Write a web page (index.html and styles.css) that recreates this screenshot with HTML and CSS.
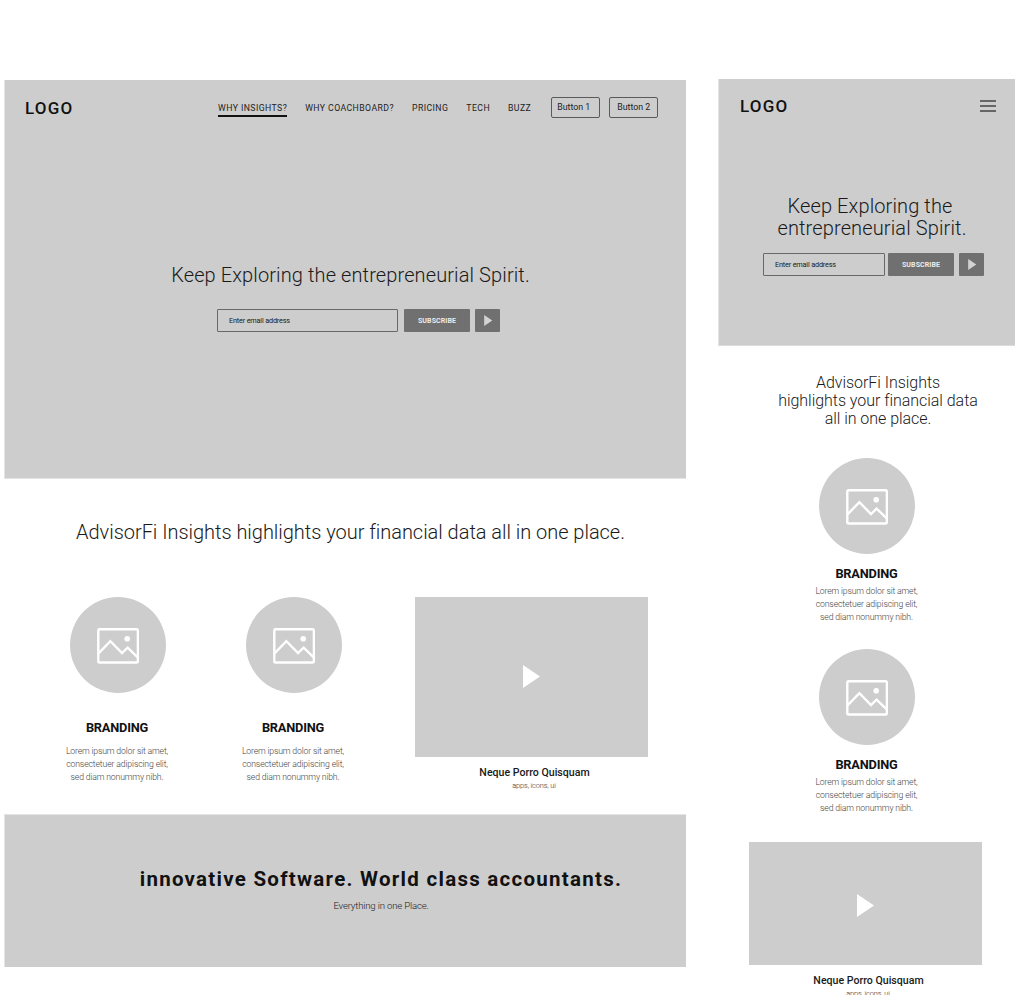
FILE: index.html
```html
<!DOCTYPE html>
<html lang="en">
<head>
<meta charset="utf-8">
<title>AdvisorFi Insights wireframes</title>
<link rel="stylesheet" href="styles.css">
</head>
<body>
<svg class="defs" aria-hidden="true">
  <symbol id="picture" viewBox="0 0 42 36">
    <rect x="1.3" y="1.3" width="39.6" height="33.2" rx="1.3" fill="none" stroke="#fff" stroke-width="2.4"/>
    <path d="M1.5 25.3 13.4 13.2 25 25 30.6 19.7 41 29.6" fill="none" stroke="#fff" stroke-width="2.4"/>
    <circle cx="30.2" cy="10.8" r="2.8" fill="#fff"/>
  </symbol>
  <symbol id="play" viewBox="0 0 17 23"><path d="M0 0 17 11.5 0 23Z" fill="currentColor"/></symbol>
</svg>

<main class="desktop">
  <section class="hero">
    <header class="bar">
      <div class="logo">LOGO</div>
      <nav class="nav">
        <a class="nav-link active">WHY INSIGHTS?</a>
        <a class="nav-link">WHY COACHBOARD?</a>
        <a class="nav-link">PRICING</a>
        <a class="nav-link">TECH</a>
        <a class="nav-link">BUZZ</a>
      </nav>
      <div class="buttons">
        <a class="button first">Button 1</a>
        <a class="button">Button 2</a>
      </div>
    </header>
    <h1 class="title">Keep Exploring the entrepreneurial Spirit.</h1>
    <form class="form">
      <div class="field">Enter email address</div>
      <div class="subscribe">SUBSCRIBE</div>
      <div class="go"><svg class="go-icon"><use href="#play"/></svg></div>
    </form>
  </section>
  <section class="features">
    <h2 class="lead">AdvisorFi Insights highlights your financial data all in one place.</h2>
    <div class="row">
      <article class="card">
        <div class="disc"><svg class="picture"><use href="#picture"/></svg></div>
        <h3 class="card-title">BRANDING</h3>
        <p class="card-text"><span class="l1">Lorem ipsum dolor sit amet,</span><br>consectetuer adipiscing elit,<br><span class="l3">sed diam nonummy nibh.</span></p>
      </article>
      <article class="card">
        <div class="disc"><svg class="picture"><use href="#picture"/></svg></div>
        <h3 class="card-title">BRANDING</h3>
        <p class="card-text"><span class="l1">Lorem ipsum dolor sit amet,</span><br>consectetuer adipiscing elit,<br><span class="l3">sed diam nonummy nibh.</span></p>
      </article>
      <article class="media">
        <div class="video"><svg class="video-icon"><use href="#play"/></svg></div>
        <h3 class="media-title">Neque Porro Quisquam</h3>
        <p class="media-text">apps, icons, ui</p>
      </article>
    </div>
  </section>
  <section class="banner">
    <h2 class="banner-title">innovative Software. World class accountants.</h2>
    <p class="banner-text">Everything in one Place.</p>
  </section>
</main>

<aside class="mobile">
  <section class="hero">
    <header class="bar">
      <div class="logo">LOGO</div>
      <div class="menu"><i class="line"></i><i class="line"></i><i class="line"></i></div>
    </header>
    <h1 class="title"><span class="t1">Keep Exploring the</span><br><span class="t2">entrepreneurial Spirit.</span></h1>
    <form class="form">
      <div class="field">Enter email address</div>
      <div class="subscribe">SUBSCRIBE</div>
      <div class="go"><svg class="go-icon"><use href="#play"/></svg></div>
    </form>
  </section>
  <h2 class="lead">AdvisorFi Insights<br>highlights your financial data<br>all in one place.</h2>
  <article class="card">
    <div class="disc"><svg class="picture"><use href="#picture"/></svg></div>
    <h3 class="card-title">BRANDING</h3>
    <p class="card-text"><span class="l1">Lorem ipsum dolor sit amet,</span><br>consectetuer adipiscing elit,<br><span class="l3">sed diam nonummy nibh.</span></p>
  </article>
  <article class="card">
    <div class="disc"><svg class="picture"><use href="#picture"/></svg></div>
    <h3 class="card-title">BRANDING</h3>
    <p class="card-text"><span class="l1">Lorem ipsum dolor sit amet,</span><br>consectetuer adipiscing elit,<br><span class="l3">sed diam nonummy nibh.</span></p>
  </article>
  <article class="media">
    <div class="video"><svg class="video-icon"><use href="#play"/></svg></div>
    <h3 class="media-title">Neque Porro Quisquam</h3>
    <p class="media-text">apps, icons, ui</p>
  </article>
</aside>
</body>
</html>
```
FILE: styles.css
```css
* { box-sizing: border-box; margin: 0; padding: 0; }
body {
  display: flex;
  align-items: flex-start;
  gap: 32px;
  height: 995px;
  padding-left: 4px;
  overflow: hidden;
  background: #fff;
  color: #1a1a1a;
  font-family: Roboto, "Liberation Sans", sans-serif;
  white-space: nowrap;
}
.defs { display: none; }
.desktop { width: 682px; margin-top: 80px; flex: none; }
.mobile { width: 297px; margin-top: 79px; flex: none; }

.hero { background: #cdcdcd; border-left: 1px solid #e4e4e4; }
.desktop .hero { height: 399px; border-bottom: 1px solid #e4e4e4; }
.mobile .hero { height: 267px; border-bottom: 1px solid #dcdcdc; }
.bar { display: flex; align-items: center; }
.desktop .bar { height: 55px; padding-left: 20px; }
.mobile .bar { height: 54px; padding: 0 19px 0 21px; justify-content: space-between; }
.logo { font-size: 17px; line-height: 20px; font-weight: 500; letter-spacing: 1.2px; color: #111; }
.desktop .logo { width: 193px; }

.nav { display: flex; gap: 18px; }
.nav-link { height: 18px; line-height: 19px; font-size: 8.7px; letter-spacing: .43px; color: #222; }
.active { border-bottom: 2px solid #111; }
.buttons { display: flex; gap: 9px; margin-left: 20px; }
.button { width: 49px; height: 21px; border: 1px solid #5a5a5a; border-radius: 2px; font-size: 8.8px; line-height: 19px; text-align: center; color: #222; }
.first { padding-right: 4px; }

.title { font-size: 20px; font-weight: 300; letter-spacing: .11px; text-align: center; }
.desktop .title { margin-top: 128px; padding-left: 10px; line-height: 24px; }
.mobile .title { margin-top: 63px; padding-left: 6px; line-height: 21.5px; }
.t2 { letter-spacing: .13px; margin-left: 4px; }

.form { display: flex; height: 23px; }
.desktop .form { margin: 22px 0 0 212px; }
.mobile .form { margin: 14px 0 0 44px; }
.field { border: 1px solid #696969; border-radius: 1px; font-size: 7.3px; line-height: 22px; letter-spacing: -.18px; padding-left: 11px; }
.desktop .field { width: 181px; margin-right: 6px; }
.mobile .field { width: 122px; margin-right: 3px; }
.subscribe { width: 66px; border-radius: 1px; background: #707070; color: #ececec; font-size: 7px; font-weight: 700; line-height: 24px; letter-spacing: .1px; text-align: center; }
.go { display: flex; align-items: center; width: 25px; margin-left: 5px; padding-left: 9px; border-radius: 1px; background: #707070; color: #d2d2d2; }
.go-icon { width: 8.5px; height: 11px; overflow: visible; }

.lead { font-weight: 300; text-align: center; }
.desktop .lead { padding-left: 11px; margin-top: 41px; font-size: 20px; line-height: 24px; letter-spacing: -.03px; }
.mobile .lead { padding-left: 23px; margin-top: 28px; font-size: 16px; line-height: 18px; letter-spacing: -.04px; }

.row { display: flex; margin-top: 53px; padding-left: 26px; }
.card { text-align: center; }
.desktop .card { width: 176px; }
.mobile .card { height: 191px; }
.mobile .lead + .card { margin-top: 30px; }
.disc { display: flex; align-items: center; justify-content: center; width: 96px; height: 96px; border-radius: 50%; background: #cdcdcd; }
.desktop .disc { margin-left: 40px; }
.mobile .disc { margin-left: 101px; }
.picture { width: 42px; height: 36px; margin-top: 1px; margin-right: 1px; }
.card-title { font-size: 12.8px; font-weight: 700; line-height: 16px; letter-spacing: -.2px; color: #111; }
.desktop .card-title { margin-top: 27px; padding-right: 2px; }
.mobile .card-title { margin-top: 12px; }
.card-text { font-size: 8.7px; font-weight: 300; line-height: 12.8px; letter-spacing: -.13px; color: #444; }
.l1, .l3 { letter-spacing: -.16px; }
.desktop .card-text { margin-top: 9px; padding-right: 2px; }
.mobile .card-text { margin-top: 3px; }

.media { width: 233px; text-align: center; }
.desktop .media { margin-left: 33px; }
.mobile .media { margin-left: 31px; margin-top: 2px; }
.video { display: flex; align-items: center; justify-content: center; background: #cdcdcd; }
.desktop .video { height: 160px; }
.mobile .video { height: 123px; }
.video-icon { width: 17px; height: 23px; color: #fff; }
.desktop .video-icon { margin-bottom: 1px; }
.mobile .video-icon { margin-top: 4px; }
.media-title { padding-left: 6px; margin-top: 8px; font-size: 10.6px; font-weight: 500; line-height: 15px; }
.media-text { padding-left: 5px; font-size: 7.4px; font-weight: 300; line-height: 11px; letter-spacing: -.14px; color: #333; }

.banner { height: 153px; margin-top: 23px; padding: 51px 0 0 71px; border-left: 1px solid #e4e4e4; border-top: 1px solid #e4e4e4; background: #cdcdcd; text-align: center; }
.banner-title { font-size: 20.5px; font-weight: 700; line-height: 26px; letter-spacing: 1.27px; color: #111; }
.banner-text { margin-top: 6px; font-size: 9.6px; font-weight: 300; line-height: 16px; letter-spacing: -.17px; color: #222; }

.menu { display: flex; flex-direction: column; gap: 3px; width: 16px; margin-top: -1px; }
.line { height: 2px; background: #666; }
```
